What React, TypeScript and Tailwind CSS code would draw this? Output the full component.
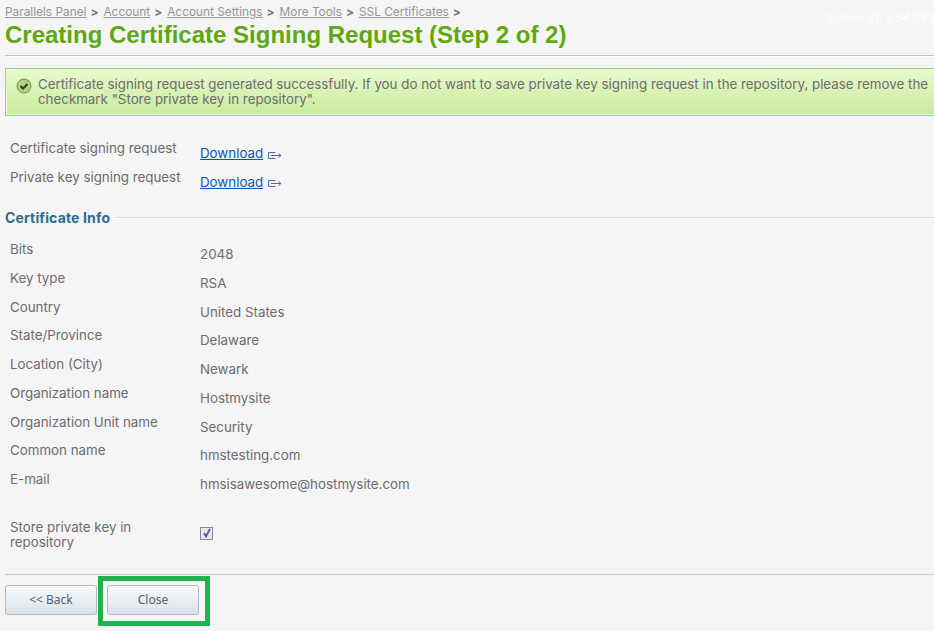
const crumbs = ["Parallels Panel", "Account", "Account Settings", "More Tools", "SSL Certificates"];

const info = [
  ["Bits", "2048"],
  ["Key type", "RSA"],
  ["Country", "United States"],
  ["State/Province", "Delaware"],
  ["Location (City)", "Newark"],
  ["Organization name", "Hostmysite"],
  ["Organization Unit name", "Security"],
  ["Common name", "hmstesting.com"],
  ["E-mail", "hmsisawesome@hostmysite.com"],
];

function DownloadIcon() {
  return (
    <svg width="14" height="9" viewBox="0 0 14 9" fill="none" stroke="#4f6a96" strokeWidth="1" className="ml-[5px] mt-[3px]">
      <path d="M7.5 1.5H.5v6h7" />
      <path d="M3 4.5h10M10.5 2.5l2.5 2-2.5 2" />
    </svg>
  );
}

function Row({ label, value }: { label: string; value: React.ReactNode }) {
  return (
    <div className="flex h-[28.75px]">
      <div className="w-[200px] pl-[10px] pt-[1px]">{label}</div>
      <div className="flex items-start pt-[6px] leading-[17px]">{value}</div>
    </div>
  );
}

function Download() {
  return (
    <span className="flex items-center">
      <a href="#" className="text-[#0b55b5] underline">Download</a>
      <DownloadIcon />
    </span>
  );
}

export default function App() {
  return (
    <div className="relative h-[631px] w-[934px] overflow-hidden bg-[#f5f5f5] font-['Inter',sans-serif] text-[13.33px] leading-[16px] text-[#6e6b70]">
      <div className="absolute left-[826px] top-[10px] whitespace-nowrap text-[11.5px] text-white/80">Screen ID: 2.54.08.8</div>

      <div className="px-[5px]">
        <div className="flex h-[19px] items-end gap-[5px] text-[11.85px] leading-[14px] text-[#979499]">
          {crumbs.map((c) => (
            <span key={c} className="flex gap-[4px]">
              <a href="#" className="underline">{c}</a>
              <span className="font-bold text-[#777]">&gt;</span>
            </span>
          ))}
        </div>
        <h1 className="mt-[2px] h-[30px] font-['Liberation_Sans',sans-serif] text-[24px] font-bold leading-[28px] text-[#5fa80f]">
          Creating Certificate Signing Request (Step 2 of 2)
        </h1>
      </div>
      <div className="ml-[5px] mt-[4px] border-t border-b border-t-[#c4c4c4] border-b-white" />

      <div className="ml-[5px] mt-[11px] flex h-[48px] w-[940px] gap-[5px] border border-[#9bd675] bg-gradient-to-b from-[#e9f9cd] to-[#c8eb9a] pl-[11px] pt-[8px] leading-[15px] shadow-[inset_0_0_0_1px_#eaf8d8]">
        <svg width="16" height="16" viewBox="0 0 16 16" className="-ml-[1px] mt-[1px] shrink-0">
          <circle cx="8" cy="8" r="7" fill="#b7cf85" stroke="#6f8f4c" />
          <path d="M4.5 8l2.5 2.5L11.5 6" fill="none" stroke="#2e3d22" strokeWidth="2" />
        </svg>
        <div className="ml-[1px] w-[895px]">
          Certificate signing request generated successfully. If you do not want to save private key signing request in the repository, please remove the checkmark "Store private key in repository".
        </div>
      </div>

      <div className="mt-[23px]">
        <Row label="Certificate signing request" value={<Download />} />
        <Row label="Private key signing request" value={<Download />} />
      </div>

      <div className="ml-[5px] mt-[12.5px] flex h-[17px] items-center">
        <span className="text-[14px] font-bold tracking-[0.15px] text-[#2b6d8f]">Certificate Info</span>
        <div className="ml-[5px] mt-[1px] flex-1 border-t border-b border-t-[#dcdcdc] border-b-white" />
      </div>

      <div className="mt-[14px]">
        {info.map(([l, v]) => (
          <Row key={l} label={l} value={v} />
        ))}
      </div>

      <div className="mt-[21px] flex">
        <div className="w-[200px] pl-[10px] leading-[15px]">Store private key in<br />repository</div>
        <div className="mt-[7px] flex h-[13px] w-[13px] items-center justify-center border border-[#8a8a8a] bg-[#e4e8ee]">
          <svg width="10" height="10" viewBox="0 0 10 10"><path d="M2 5l2 3.5L8 1" fill="none" stroke="#3f5a9e" strokeWidth="1.7" /></svg>
        </div>
      </div>

      <div className="ml-[5px] mt-[24px] border-t border-[#c9c9c9]" />

      <div className="ml-[5px] mt-[10px] flex gap-[10px]">
        {["<< Back", "Close"].map((b) => (
          <div key={b} className="relative">
            <button className="h-[30px] w-[92px] rounded-[3px] border border-[#aebcc6] bg-gradient-to-b from-[#f5f9fc] to-[#dbe3e8] pt-[1px] font-['Noto_Sans',sans-serif] text-[12px] text-[#55606a]">
              {b}
            </button>
            {b === "Close" && <div className="absolute -bottom-[11px] -left-[9px] -right-[11px] -top-[9px] border-[5px] border-[#22b14c]" />}
          </div>
        ))}
      </div>
    </div>
  );
}
